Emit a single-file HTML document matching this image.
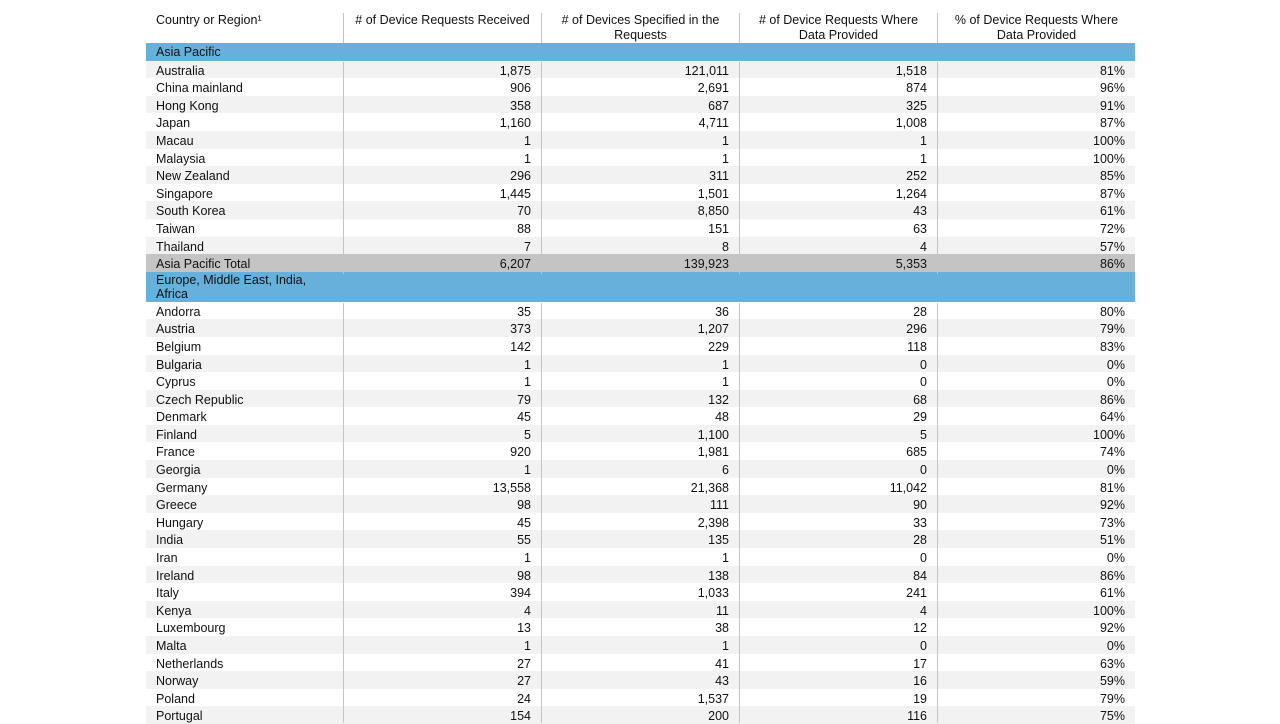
<!DOCTYPE html>
<html><head><meta charset="utf-8"><style>
body{margin:0;width:1280px;height:720px;overflow:hidden;background:#fff;font-family:"Liberation Sans",Arial,sans-serif;font-size:12.5px;color:#111;position:relative}
.vl{position:absolute;top:13px;height:720px;width:1px;background:#c4c4c4}
.hd{position:absolute;top:13px;text-align:center;line-height:15px;font-size:12.5px}
table{position:absolute;left:146px;top:43px;border-collapse:collapse;table-layout:fixed;width:989px}
td{height:14.6px;padding:3px 10px 0 10px;line-height:14.6px;text-align:right;white-space:nowrap;overflow:hidden}
td:first-child{text-align:left;padding-left:10px}
col.a{width:197px}col.b{width:198px}
tr.g td{background:#f2f2f2}
tr.bl td{background:#66b0dc;padding-top:1px;height:16.6px}
tr.t td{background:#c4c4c4}
tr.bl2 td{background:#66b0dc;height:28px;padding-top:1px;line-height:14.5px;white-space:normal}
</style></head><body>
<div class="hd" style="left:156px;text-align:left">Country or Region¹</div>
<div class="hd" style="left:344px;width:197px">&#35; of Device Requests Received</div>
<div class="hd" style="left:542px;width:197px">&#35; of Devices Specified in the<br>Requests</div>
<div class="hd" style="left:740px;width:197px">&#35; of Device Requests Where<br>Data Provided</div>
<div class="hd" style="left:938px;width:197px">% of Device Requests Where<br>Data Provided</div>
<table>
<colgroup><col class="a"><col class="b"><col class="b"><col class="b"><col class="b"></colgroup>
<tr class="bl"><td>Asia Pacific</td><td></td><td></td><td></td><td></td></tr>
<tr class="g"><td>Australia</td><td>1,875</td><td>121,011</td><td>1,518</td><td>81%</td></tr>
<tr><td>China mainland</td><td>906</td><td>2,691</td><td>874</td><td>96%</td></tr>
<tr class="g"><td>Hong Kong</td><td>358</td><td>687</td><td>325</td><td>91%</td></tr>
<tr><td>Japan</td><td>1,160</td><td>4,711</td><td>1,008</td><td>87%</td></tr>
<tr class="g"><td>Macau</td><td>1</td><td>1</td><td>1</td><td>100%</td></tr>
<tr><td>Malaysia</td><td>1</td><td>1</td><td>1</td><td>100%</td></tr>
<tr class="g"><td>New Zealand</td><td>296</td><td>311</td><td>252</td><td>85%</td></tr>
<tr><td>Singapore</td><td>1,445</td><td>1,501</td><td>1,264</td><td>87%</td></tr>
<tr class="g"><td>South Korea</td><td>70</td><td>8,850</td><td>43</td><td>61%</td></tr>
<tr><td>Taiwan</td><td>88</td><td>151</td><td>63</td><td>72%</td></tr>
<tr class="g"><td>Thailand</td><td>7</td><td>8</td><td>4</td><td>57%</td></tr>
<tr class="t"><td>Asia Pacific Total</td><td>6,207</td><td>139,923</td><td>5,353</td><td>86%</td></tr>
<tr class="bl2"><td>Europe, Middle East, India,<br>Africa</td><td></td><td></td><td></td><td></td></tr>
<tr><td>Andorra</td><td>35</td><td>36</td><td>28</td><td>80%</td></tr>
<tr class="g"><td>Austria</td><td>373</td><td>1,207</td><td>296</td><td>79%</td></tr>
<tr><td>Belgium</td><td>142</td><td>229</td><td>118</td><td>83%</td></tr>
<tr class="g"><td>Bulgaria</td><td>1</td><td>1</td><td>0</td><td>0%</td></tr>
<tr><td>Cyprus</td><td>1</td><td>1</td><td>0</td><td>0%</td></tr>
<tr class="g"><td>Czech Republic</td><td>79</td><td>132</td><td>68</td><td>86%</td></tr>
<tr><td>Denmark</td><td>45</td><td>48</td><td>29</td><td>64%</td></tr>
<tr class="g"><td>Finland</td><td>5</td><td>1,100</td><td>5</td><td>100%</td></tr>
<tr><td>France</td><td>920</td><td>1,981</td><td>685</td><td>74%</td></tr>
<tr class="g"><td>Georgia</td><td>1</td><td>6</td><td>0</td><td>0%</td></tr>
<tr><td>Germany</td><td>13,558</td><td>21,368</td><td>11,042</td><td>81%</td></tr>
<tr class="g"><td>Greece</td><td>98</td><td>111</td><td>90</td><td>92%</td></tr>
<tr><td>Hungary</td><td>45</td><td>2,398</td><td>33</td><td>73%</td></tr>
<tr class="g"><td>India</td><td>55</td><td>135</td><td>28</td><td>51%</td></tr>
<tr><td>Iran</td><td>1</td><td>1</td><td>0</td><td>0%</td></tr>
<tr class="g"><td>Ireland</td><td>98</td><td>138</td><td>84</td><td>86%</td></tr>
<tr><td>Italy</td><td>394</td><td>1,033</td><td>241</td><td>61%</td></tr>
<tr class="g"><td>Kenya</td><td>4</td><td>11</td><td>4</td><td>100%</td></tr>
<tr><td>Luxembourg</td><td>13</td><td>38</td><td>12</td><td>92%</td></tr>
<tr class="g"><td>Malta</td><td>1</td><td>1</td><td>0</td><td>0%</td></tr>
<tr><td>Netherlands</td><td>27</td><td>41</td><td>17</td><td>63%</td></tr>
<tr class="g"><td>Norway</td><td>27</td><td>43</td><td>16</td><td>59%</td></tr>
<tr><td>Poland</td><td>24</td><td>1,537</td><td>19</td><td>79%</td></tr>
<tr class="g"><td>Portugal</td><td>154</td><td>200</td><td>116</td><td>75%</td></tr>
</table>
<div class="vl" style="left:343px;top:13px;height:30px"></div>
<div class="vl" style="left:541px;top:13px;height:30px"></div>
<div class="vl" style="left:739px;top:13px;height:30px"></div>
<div class="vl" style="left:937px;top:13px;height:30px"></div>
<div class="vl" style="left:343px;top:62px;height:212px"></div>
<div class="vl" style="left:541px;top:62px;height:212px"></div>
<div class="vl" style="left:739px;top:62px;height:212px"></div>
<div class="vl" style="left:937px;top:62px;height:212px"></div>
<div class="vl" style="left:343px;top:303px;height:420px"></div>
<div class="vl" style="left:541px;top:303px;height:420px"></div>
<div class="vl" style="left:739px;top:303px;height:420px"></div>
<div class="vl" style="left:937px;top:303px;height:420px"></div>
</body></html>
